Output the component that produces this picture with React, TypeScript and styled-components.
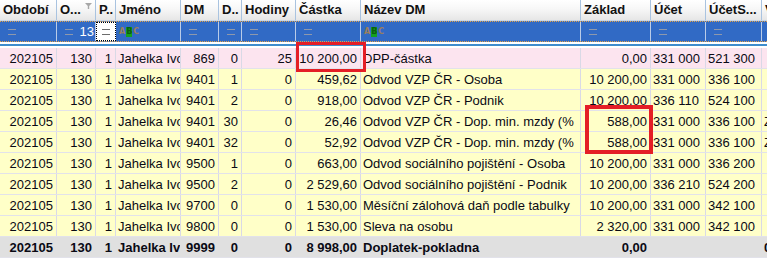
import React from "react";
import styled, { createGlobalStyle, css } from "styled-components";

const Global = createGlobalStyle`
  html, body { margin: 0; padding: 0; background: #ffffff; }
  body { font-family: "Liberation Sans", Arial, sans-serif; }
`;

const COLS = "57px 39px 20px 65px 38px 23px 54px 65px 220px 70px 55px 56px 60px";

const Grid = styled.div`
  position: relative;
  width: 767px;
  height: 260px;
  overflow: hidden;
  background: #ffffff;
  font-family: "Liberation Sans", Arial, sans-serif;
  font-size: 13px;
  color: #000000;
`;

const HeaderRow = styled.div`
  display: grid;
  grid-template-columns: ${COLS};
  height: 21px;
  box-sizing: border-box;
  border-bottom: 1px solid #c9d6e6;
  background: linear-gradient(#ffffff 0%, #f7f7f7 45%, #e6e6e6 100%);
`;

const HeadCell = styled.div`
  position: relative;
  box-sizing: border-box;
  border-right: 1px solid #a9c3e0;
  padding-left: 3px;
  font-weight: bold;
  line-height: 20px;
  white-space: nowrap;
  overflow: hidden;
  color: #111111;
`;

const Funnel = styled.svg`
  position: absolute;
  right: 3px;
  top: 3px;
`;

const FilterRow = styled.div`
  display: grid;
  grid-template-columns: ${COLS};
  height: 21px;
  box-sizing: border-box;
  background: #316ac5;
  border-top: 1px dotted #e3a34a;
  border-bottom: 1px dotted #e3a34a;
`;

const FilterCell = styled.div<{ $active?: boolean }>`
  box-sizing: border-box;
  display: flex;
  align-items: center;
  padding-left: 8px;
  border-right: 1px solid #b9cbe8;
  overflow: hidden;
  white-space: nowrap;
  ${(p) =>
    p.$active &&
    css`
      background: #ffffff;
      border: 1px dotted #000000;
      justify-content: center;
      padding-left: 0;
    `}
`;

const Eq = styled.span<{ $dark?: boolean }>`
  display: inline-block;
  flex: none;
  width: 8px;
  height: 4px;
  border-top: 1px solid ${(p) => (p.$dark ? "#6c6c6c" : "#8e98ab")};
  border-bottom: 1px solid ${(p) => (p.$dark ? "#6c6c6c" : "#8e98ab")};
`;

const FilterValue = styled.span`
  margin-left: auto;
  padding-right: 1px;
  color: #ffffff;
  font-size: 13px;
`;

const Abc = styled.span`
  display: inline-flex;
  align-items: center;
  margin-left: -5px;
  font-family: "DejaVu Sans", sans-serif;
  font-size: 8px;
  font-weight: bold;
  color: #9a7f5c;
  gap: 1px;
`;

const AbcMid = styled.span`
  display: inline-flex;
  align-items: center;
  justify-content: center;
  width: 6px;
  height: 10px;
  background: #14a01e;
  color: #0b5e10;
`;

const Separator = styled.div`
  height: 6px;
  box-sizing: border-box;
  border-top: 2px solid #ffffff;
  border-bottom: 2px solid #ffffff;
  background: #3f8ccc;
`;

type Kind = "pink" | "yellow" | "total";

const bg: Record<Kind, string> = {
  pink: "#fce4ef",
  yellow: "#ffffc8",
  total: "#e0e0e0",
};

const DataRow = styled.div<{ $kind: Kind }>`
  display: grid;
  grid-template-columns: ${COLS};
  height: 21px;
  box-sizing: border-box;
  border-bottom: 1px solid #e2e2ea;
  background: ${(p) => bg[p.$kind]};
  font-weight: ${(p) => (p.$kind === "total" ? "bold" : "normal")};
`;

const Cell = styled.div<{ $num?: boolean; $kind: Kind }>`
  box-sizing: border-box;
  border-right: 1px solid ${(p) => (p.$kind === "total" ? "transparent" : "#d9d9e6")};
  padding-top: 2px;
  line-height: 18px;
  white-space: nowrap;
  overflow: hidden;
  text-align: ${(p) => (p.$num ? "right" : "left")};
  padding-right: ${(p) => (p.$num ? "3px" : "0")};
  padding-left: ${(p) => (p.$num ? "0" : "2px")};
  color: #0a0a14;
`;

const Mark = styled.div<{ $x: number; $y: number; $w: number; $h: number; $t: number }>`
  position: absolute;
  left: ${(p) => p.$x}px;
  top: ${(p) => p.$y}px;
  width: ${(p) => p.$w}px;
  height: ${(p) => p.$h}px;
  box-sizing: border-box;
  border: ${(p) => p.$t}px solid #e41e26;
  pointer-events: none;
`;

type ColDef = { title: string; num: boolean; filter: "eq" | "abc" | "none" };

const columns: ColDef[] = [
  { title: "Období", num: true, filter: "eq" },
  { title: "O...", num: true, filter: "eq" },
  { title: "P..", num: true, filter: "eq" },
  { title: "Jméno", num: false, filter: "abc" },
  { title: "DM", num: true, filter: "eq" },
  { title: "D..", num: true, filter: "eq" },
  { title: "Hodiny", num: true, filter: "eq" },
  { title: "Částka", num: true, filter: "eq" },
  { title: "Název DM", num: false, filter: "abc" },
  { title: "Základ", num: true, filter: "eq" },
  { title: "Účet", num: false, filter: "eq" },
  { title: "ÚčetS...", num: false, filter: "eq" },
  { title: "V", num: false, filter: "none" },
];

const rows: { kind: Kind; cells: string[] }[] = [
  { kind: "pink", cells: ["202105", "130", "1", "Jahelka Ivo", "869", "0", "25", "10 200,00", "DPP-částka", "0,00", "331 000", "521 300", ""] },
  { kind: "yellow", cells: ["202105", "130", "1", "Jahelka Ivo", "9401", "1", "0", "459,62", "Odvod VZP ČR - Osoba", "10 200,00", "331 000", "336 100", ""] },
  { kind: "yellow", cells: ["202105", "130", "1", "Jahelka Ivo", "9401", "2", "0", "918,00", "Odvod VZP ČR - Podnik", "10 200,00", "336 110", "524 100", ""] },
  { kind: "yellow", cells: ["202105", "130", "1", "Jahelka Ivo", "9401", "30", "0", "26,46", "Odvod VZP ČR - Dop. min. mzdy (%", "588,00", "331 000", "336 100", "ZP"] },
  { kind: "yellow", cells: ["202105", "130", "1", "Jahelka Ivo", "9401", "32", "0", "52,92", "Odvod VZP ČR - Dop. min. mzdy (%", "588,00", "331 000", "336 100", "ZP"] },
  { kind: "yellow", cells: ["202105", "130", "1", "Jahelka Ivo", "9500", "1", "0", "663,00", "Odvod sociálního pojištění - Osoba", "10 200,00", "331 000", "336 200", ""] },
  { kind: "yellow", cells: ["202105", "130", "1", "Jahelka Ivo", "9500", "2", "0", "2 529,60", "Odvod sociálního pojištění - Podnik", "10 200,00", "336 210", "524 200", ""] },
  { kind: "yellow", cells: ["202105", "130", "1", "Jahelka Ivo", "9700", "0", "0", "1 530,00", "Měsíční zálohová daň podle tabulky", "10 200,00", "331 000", "342 100", ""] },
  { kind: "yellow", cells: ["202105", "130", "1", "Jahelka Ivo", "9800", "0", "0", "1 530,00", "Sleva na osobu", "2 320,00", "331 000", "342 100", ""] },
  { kind: "total", cells: ["202105", "130", "1", "Jahelka Ivo", "9999", "0", "0", "8 998,00", "Doplatek-pokladna", "0,00", "", "", "0"] },
];

export default function App() {
  return (
    <>
      <Global />
      <Grid>
        <HeaderRow>
          {columns.map((c, i) => (
            <HeadCell key={i}>
              {c.title}
              {i === 1 && (
                <Funnel width="7" height="6" viewBox="0 0 7 6">
                  <path d="M0 0 H7 L4.2 3 V6 H2.8 V3 Z" fill="#a8a8a8" />
                </Funnel>
              )}
            </HeadCell>
          ))}
        </HeaderRow>
        <FilterRow>
          {columns.map((c, i) => {
            if (i === 2)
              return (
                <FilterCell key={i} $active>
                  <Eq $dark />
                </FilterCell>
              );
            return (
              <FilterCell key={i}>
                {c.filter === "eq" && <Eq />}
                {c.filter === "abc" && (
                  <Abc>
                    A<AbcMid>B</AbcMid>C
                  </Abc>
                )}
                {i === 1 && <FilterValue>13</FilterValue>}
              </FilterCell>
            );
          })}
        </FilterRow>
        <Separator />
        {rows.map((r, ri) => (
          <DataRow key={ri} $kind={r.kind}>
            {r.cells.map((v, ci) => (
              <Cell key={ci} $kind={r.kind} $num={columns[ci].num}>
                {v}
              </Cell>
            ))}
          </DataRow>
        ))}
        <Mark $x={296} $y={42} $w={70} $h={30} $t={3} />
        <Mark $x={585} $y={105} $w={68} $h={49} $t={4} />
      </Grid>
    </>
  );
}
